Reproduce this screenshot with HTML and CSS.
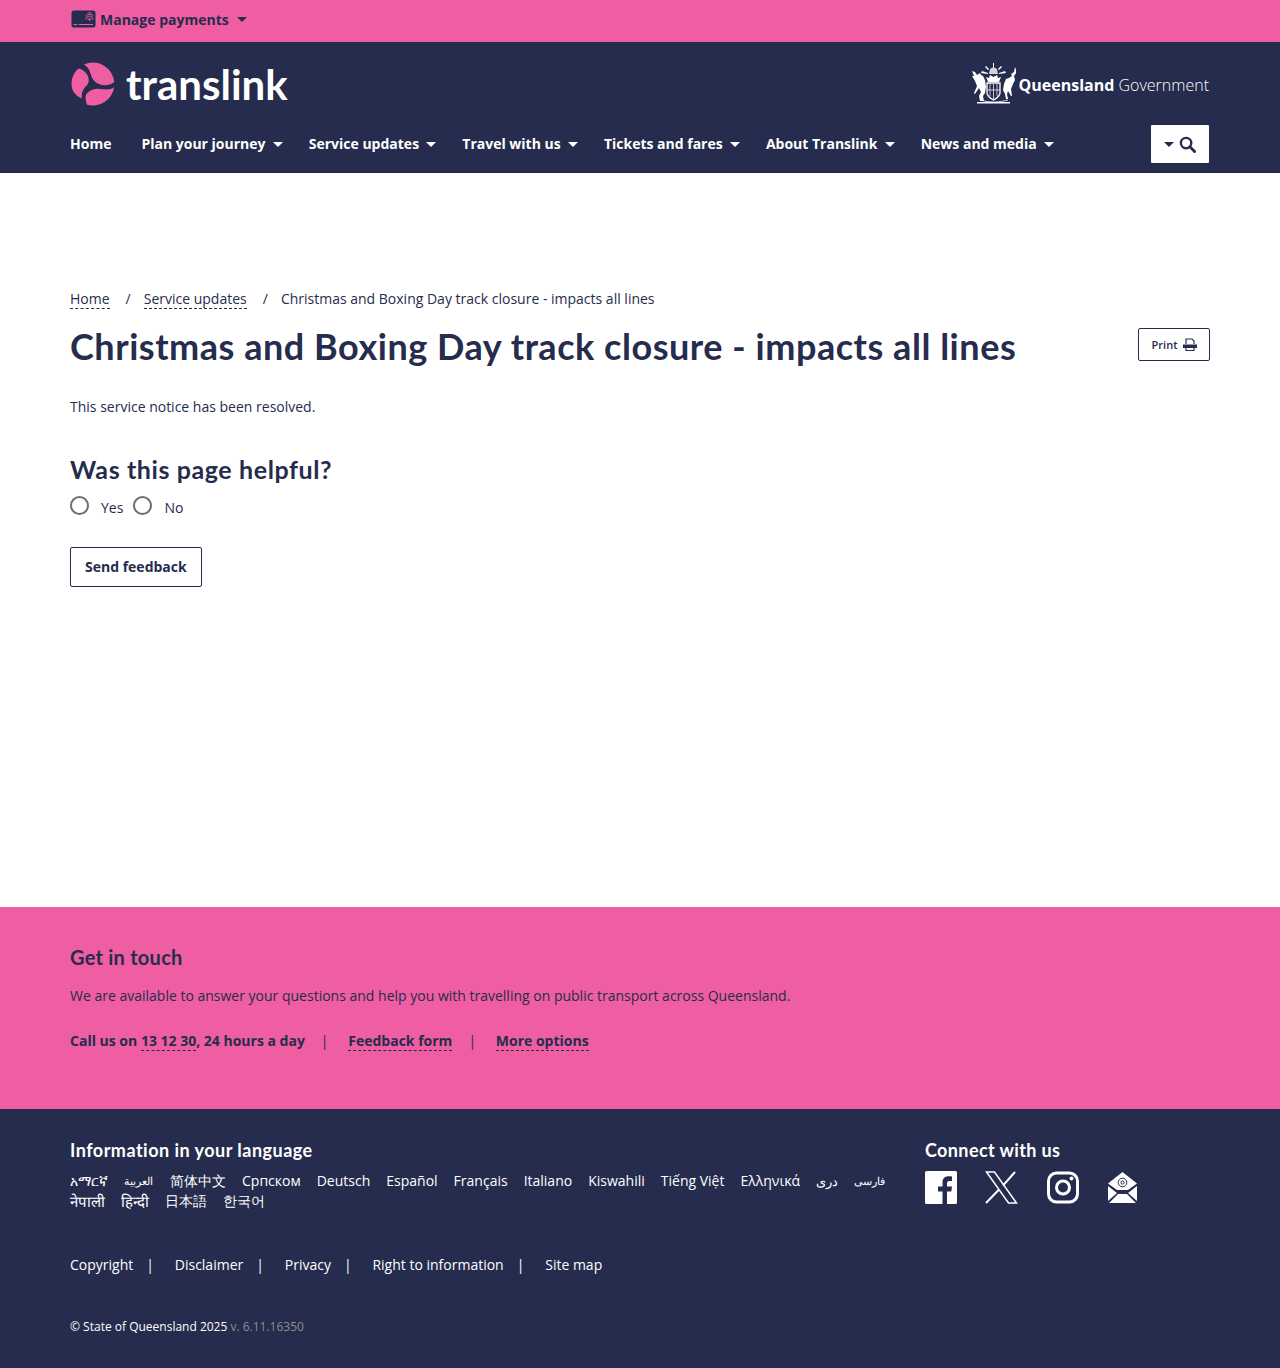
FILE: index.html
```html
<!DOCTYPE html>
<html lang="en">
<head>
  <meta charset="UTF-8">
  <meta name="viewport" content="width=device-width, initial-scale=1.0">
  <title>Christmas and Boxing Day track closure - impacts all lines</title>
  <link rel="stylesheet" href="styles.css">
</head>
<body>
  <div class="topbar">
    <div class="wrap">
      <a class="manage" href="#">
        <svg class="card-icon" width="25" height="18" viewBox="0 0 25 18">
          <rect x="0.500" y="0.500" width="24" height="17" rx="2.500" fill="#252c4d"/>
          <path d="M2.500 14.500h4M8 14.500h14" stroke="#ef5ea2" stroke-width="1" fill="none"/>
          <path d="M15 9.500a3.500 3.500 0 0 1 7 0M16.800 10a1.800 1.800 0 0 1 3.500 0M14.500 6a5.500 5.500 0 0 1 8 0M16.500 3.300a4 4 0 0 1 4 0M18.500 8v3" stroke="#ef5ea2" stroke-width="0.900" fill="none"/>
        </svg>
        Manage payments
        <span class="caret"></span>
      </a>
    </div>
  </div>

  <header class="header">
    <div class="wrap">
      <div class="brand-row">
        <a class="logo" href="#">
          <svg width="44" height="44" viewBox="0 0 44 44" fill="#ef5ea2">
            <path d="M13 2.500A21.500 21.500 0 0 1 43.300 20C38 24.500 28 25 22.500 18C19 13.500 20 6.500 13 2.500Z"/>
            <path d="M7.500 6.500C3 10.500 .5 16 .5 22C.5 28.500 4 33.500 11 36.500C10 31 12 27 16.500 22.500C20 18 16.500 8.500 7.500 6.500Z"/>
            <path d="M14.500 35C15 30.500 21 26.500 27 26.800C33 27 38 29 43.200 25A21.500 21.500 0 0 1 16 42.700C15 40 14.500 38 14.500 35Z"/>
          </svg>
          <span class="wordmark">translink</span>
        </a>
        <a class="qg" href="#">
          <svg width="44" height="42" viewBox="0 0 44 42" fill="#fff" stroke="none">
            <path d="M15 20h13v10c0 3-3 5-6.500 7-3.500-2-6.500-4-6.500-7Z" fill="none" stroke="#fff" stroke-width="1.300"/>
            <path d="M21.500 21v15M15 27h13M18 21v12M25 21v12" fill="none" stroke="#fff" stroke-width="0.700"/>
            <path d="M16 19l-2-5 3 1 1-3 3.500 2 3.500-2 1 3 3-1-2 5Z"/>
            <path d="M17 11l1-5 3.500-2 3.500 2 1 5Z" opacity="0.800"/>
            <path d="M21 0h1v4h-1ZM13 4l3 3 1-1-3-3ZM30 4l-3 3-1-1 3-3ZM10 8l6 2v1l-7-1ZM33 8l-6 2v1l7-1Z"/>
            <path d="M0 8l3 1 2 3 3-2 1 2 2 1 2 4 1 7-1 6-2 3 1 5H8l-1-5 2-4-2-4-4 6-1-1 3-7-2-5-3-5 2 0Z"/>
            <path d="M43 4l-1 5-3 2 1 2-3 2-3 1-2 5-1 6 2 4 1 5h2l-1-5 1-3 3 5h1l-1-7 2-5 2-4-1-4 3-4Z"/>
            <path d="M5 39h33v1.500H5Z"/>
            <path d="M8 37c4 1 8 2 14 2s10-1 14-2" fill="none" stroke="#fff" stroke-width="0.800"/>
          </svg>
          <span class="qg-name"><b>Queensland</b> Government</span>
        </a>
      </div>
      <nav class="nav">
        <a class="nav-home" href="#">Home</a>
        <a href="#">Plan your journey<span class="caret"></span></a>
        <a href="#">Service updates<span class="caret"></span></a>
        <a href="#">Travel with us<span class="caret"></span></a>
        <a href="#">Tickets and fares<span class="caret"></span></a>
        <a href="#">About Translink<span class="caret"></span></a>
        <a href="#">News and media<span class="caret"></span></a>
        <button class="search-btn">
          <span class="caret"></span>
          <svg width="17" height="17" viewBox="0 0 18 18" fill="none" stroke="#252c4d">
            <circle cx="7.500" cy="7.500" r="5.500" stroke-width="2.500"/>
            <path d="M11.500 11.500l5 5" stroke-width="3" stroke-linecap="round"/>
          </svg>
        </button>
      </nav>
    </div>
  </header>

  <main class="wrap main">
    <ol class="crumbs">
      <li><a href="#">Home</a></li>
      <li><a href="#">Service updates</a></li>
      <li>Christmas and Boxing Day track closure - impacts all lines</li>
    </ol>
    <div class="title-row">
      <h1>Christmas and Boxing Day track closure - impacts all lines</h1>
      <button class="print-btn">
        Print
        <svg width="14" height="13" viewBox="0 0 14 13" fill="none" stroke="#252c4d">
          <path d="M3 6V1h6l2 2v3M3 9.500v3h8v-3" stroke-width="1.200"/>
          <path d="M0 6.500h14V10H0Z" fill="#252c4d" stroke="none"/>
        </svg>
      </button>
    </div>
    <p class="notice">This service notice has been resolved.</p>

    <h2 class="helpful">Was this page helpful?</h2>
    <div class="radios">
      <label><span class="radio"></span>Yes</label>
      <label><span class="radio"></span>No</label>
    </div>
    <button class="send-btn">Send feedback</button>
  </main>

  <section class="touch">
    <div class="wrap">
      <h2>Get in touch</h2>
      <p>We are available to answer your questions and help you with travelling on public transport across Queensland.</p>
      <div class="touch-links">
        <span>Call us on <a class="inline" href="#">13 12 30</a>, 24 hours a day</span>
        <i>|</i>
        <a href="#">Feedback form</a>
        <i>|</i>
        <a href="#">More options</a>
      </div>
    </div>
  </section>

  <footer class="footer">
    <div class="wrap">
      <div class="footer-top">
        <div class="langs">
          <h3>Information in your language</h3>
          <div class="lang-list">
            <a href="#">አማርኛ</a>
            <a href="#" class="small arabic">العربية</a>
            <a href="#">简体中文</a>
            <a href="#">Српском</a>
            <a href="#">Deutsch</a>
            <a href="#">Español</a>
            <a href="#">Français</a>
            <a href="#">Italiano</a>
            <a href="#">Kiswahili</a>
            <a href="#">Tiếng Việt</a>
            <a href="#">Ελληνικά</a>
            <a href="#" class="dari">دری</a>
            <a href="#" class="small">فارسی</a>
            <a href="#" class="deva">नेपाली</a>
            <a href="#" class="deva">हिन्दी</a>
            <a href="#">日本語</a>
            <a href="#">한국어</a>
          </div>
        </div>
        <div class="connect">
          <h3>Connect with us</h3>
          <div class="social">
            <svg width="32" height="33" viewBox="0 0 32 33">
              <path d="M1.500 0h29A1.500 1.500 0 0 1 32 1.500v30a1.500 1.500 0 0 1-1.500 1.500H22V20.500h4.300l.7-5H22v-3c0-1.500.5-2.500 2.500-2.500H27V5.500c-.5 0-2-.2-3.500-.2-3.500 0-6 2.100-6 6v4.200H13v5h4.500V33h-16A1.500 1.500 0 0 1 0 31.500v-30A1.500 1.500 0 0 1 1.500 0Z" fill="#fff"/>
            </svg>
            <svg width="33" height="33" viewBox="0 0 33 33" fill="none" stroke="#fff">
              <path d="M1.500 1h8l22 31h-8Z" stroke-width="1.500"/>
              <path d="M30 1L18 14.500M14 18.500L1 32" stroke-width="2"/>
            </svg>
            <svg class="ig" width="32" height="33" viewBox="0 0 32 33" fill="none" stroke="#fff">
              <rect x="1.500" y="2" width="29" height="29" rx="8" stroke-width="3"/>
              <circle cx="16" cy="16.500" r="6.500" stroke-width="3"/>
              <circle cx="24.500" cy="7.500" r="2" fill="#fff" stroke="none"/>
            </svg>
            <svg class="mail" width="29" height="33" viewBox="0 0 29 33">
              <path d="M0 12.500L14.500 1 29 12.500 20 19H9Z" fill="#fff"/>
              <path d="M0 15l9 7L0 30ZM29 15l-9 7 9 8ZM10 23h9l9 9H1Z" fill="#fff"/>
              <circle cx="14.500" cy="11.500" r="4.300" fill="none" stroke="#252c4d" stroke-width="1"/>
              <circle cx="14.500" cy="11.500" r="1.600" fill="none" stroke="#252c4d" stroke-width="1"/>
            </svg>
          </div>
        </div>
      </div>
      <div class="legal">
        <a href="#">Copyright</a><i>|</i>
        <a href="#">Disclaimer</a><i>|</i>
        <a href="#">Privacy</a><i>|</i>
        <a href="#">Right to information</a><i>|</i>
        <a href="#">Site map</a>
      </div>
      <p class="copy">© State of Queensland 2025 <span>v. 6.11.16350</span></p>
    </div>
  </footer>
</body>
</html>
```

FILE: styles.css
```css
* {
  box-sizing: border-box;
}

body {
  margin: 0;
  font-family: "Open Sans", sans-serif;
  font-size: 14px;
  color: #252c4d;
  background: #fff;
}

a {
  color: inherit;
  text-decoration: none;
}

.wrap {
  width: 1140px;
  margin: 0 auto;
}

.caret {
  display: inline-block;
  width: 0;
  height: 0;
  margin-left: 7px;
  border-top: 5px solid currentColor;
  border-left: 5px solid transparent;
  border-right: 5px solid transparent;
  vertical-align: 2px;
}

.topbar {
  height: 42px;
  background: #ef5ea2;
}

.manage {
  display: inline-flex;
  align-items: center;
  height: 38px;
  margin-left: 1px;
  font-size: 14px;
  font-weight: 700;
}

.manage .caret {
  margin-left: 8px;
}

.card-icon {
  margin-right: 4px;
}

.header {
  height: 131px;
  background: #252c4d;
  color: #fff;
}

.brand-row {
  display: flex;
  justify-content: space-between;
  align-items: center;
  height: 83px;
}

.logo {
  display: flex;
  align-items: center;
  gap: 11px;
  margin-left: 1px;
}

.wordmark {
  font-family: Lato, sans-serif;
  font-size: 42px;
  font-weight: 700;
  line-height: 44px;
}

.qg {
  display: flex;
  align-items: center;
  gap: 3px;
  margin-right: 1px;
}

.qg-name {
  margin-top: 2px;
  font-size: 16px;
  font-weight: 300;
}

.qg-name b {
  font-weight: 700;
}

.nav {
  display: flex;
  align-items: center;
  height: 38px;
  font-size: 14px;
  font-weight: 700;
}

.nav a {
  position: relative;
  top: -1px;
  margin-right: 26.200px;
}

.nav .nav-home {
  margin-right: 30px;
}

.search-btn {
  display: flex;
  align-items: center;
  justify-content: center;
  gap: 5px;
  width: 58px;
  height: 38px;
  margin-left: auto;
  margin-right: 1px;
  padding: 0;
  border: none;
  border-radius: 1px;
  background: #fff;
  color: #252c4d;
}

.search-btn .caret {
  margin-left: 0;
  vertical-align: 0;
}

.main {
  height: 734px;
  padding-top: 115px;
}

.crumbs {
  display: flex;
  margin: 0;
  padding: 0;
  list-style: none;
  line-height: 22px;
}

.crumbs a {
  border-bottom: 1px dashed #252c4d;
}

.crumbs li + li::before {
  content: "/";
  margin: 0 13px 0 16px;
}

.title-row {
  display: flex;
  justify-content: space-between;
  align-items: flex-start;
  margin-top: 14px;
}

h1 {
  margin: 0;
  font-family: Lato, sans-serif;
  font-size: 36px;
  font-weight: 700;
  letter-spacing: 0.53px;
  line-height: 44px;
}

.print-btn {
  display: flex;
  align-items: center;
  gap: 5px;
  height: 33px;
  margin-top: 4px;
  padding: 0 12.500px;
  border: 1px solid #252c4d;
  border-radius: 2px;
  background: #fff;
  color: #252c4d;
  font-family: "Open Sans", sans-serif;
  font-size: 11px;
  font-weight: 600;
}

.notice {
  margin: 28px 0 0;
  line-height: 22px;
}

.helpful {
  margin: 35px 0 0;
  font-family: Lato, sans-serif;
  font-size: 25px;
  font-weight: 700;
  letter-spacing: 0.6px;
  line-height: 32px;
}

.radios {
  display: flex;
  gap: 10px;
  margin-top: 12px;
}

.radios label {
  display: flex;
  align-items: center;
  gap: 12px;
  line-height: 22px;
}

.radio {
  width: 19px;
  height: 19px;
  margin-top: -6px;
  border: 2px solid #6f6f6f;
  border-radius: 50%;
}

.send-btn {
  display: block;
  height: 40px;
  margin-top: 28px;
  padding: 0 14px 2px;
  border: 1px solid #252c4d;
  border-radius: 2px;
  background: #fff;
  color: #252c4d;
  font-family: "Open Sans", sans-serif;
  font-size: 14px;
  font-weight: 700;
}

.touch {
  height: 202px;
  padding-top: 36px;
  background: #ef5ea2;
}

.touch h2 {
  margin: 0;
  font-family: Lato, sans-serif;
  font-size: 20px;
  font-weight: 700;
  letter-spacing: 0.25px;
  line-height: 28px;
}

.touch p {
  margin: 14px 0 0;
  line-height: 22px;
}

.touch-links {
  display: flex;
  margin-top: 23px;
  font-weight: 700;
  line-height: 22px;
}

.touch-links > a {
  align-self: flex-start;
  margin-top: 1px;
  line-height: 19px;
}

.touch-links a {
  border-bottom: 1px dashed #252c4d;
}

.touch-links i {
  margin: 0 19.700px 0 16px;
  font-style: normal;
  font-weight: 400;
}

.footer {
  height: 259px;
  padding-top: 28px;
  background: #252c4d;
  color: #fff;
}

.footer-top {
  display: flex;
  justify-content: space-between;
}

.footer h3 {
  margin: 0;
  font-family: Lato, sans-serif;
  font-size: 18px;
  font-weight: 700;
  letter-spacing: 0.48px;
  line-height: 26px;
}

.langs {
  width: 830px;
}

.lang-list {
  display: flex;
  flex-wrap: wrap;
  column-gap: 16px;
  margin-top: 8px;
  line-height: 20px;
}

.lang-list .small {
  font-size: 11px;
}

.lang-list .arabic {
  margin-right: 1px;
}

.lang-list .dari {
  font-size: 13px;
}

.lang-list .deva {
  font-size: 15px;
}

.connect {
  width: 285px;
}

.connect h3 {
  letter-spacing: 0.38px;
}

.social {
  display: flex;
  align-items: center;
  gap: 28px;
  margin-top: 8px;
}

.social .ig {
  margin-left: 0.500px;
}

.social .mail {
  margin-left: 1px;
}

.legal {
  display: flex;
  margin-top: 43px;
  line-height: 22px;
}

.legal i {
  margin: 0 20.800px 0 13px;
  font-style: normal;
}

.copy {
  margin: 40px 0 0;
  font-size: 12px;
  line-height: 22px;
}

.copy span {
  color: #8f8f8f;
}
```
